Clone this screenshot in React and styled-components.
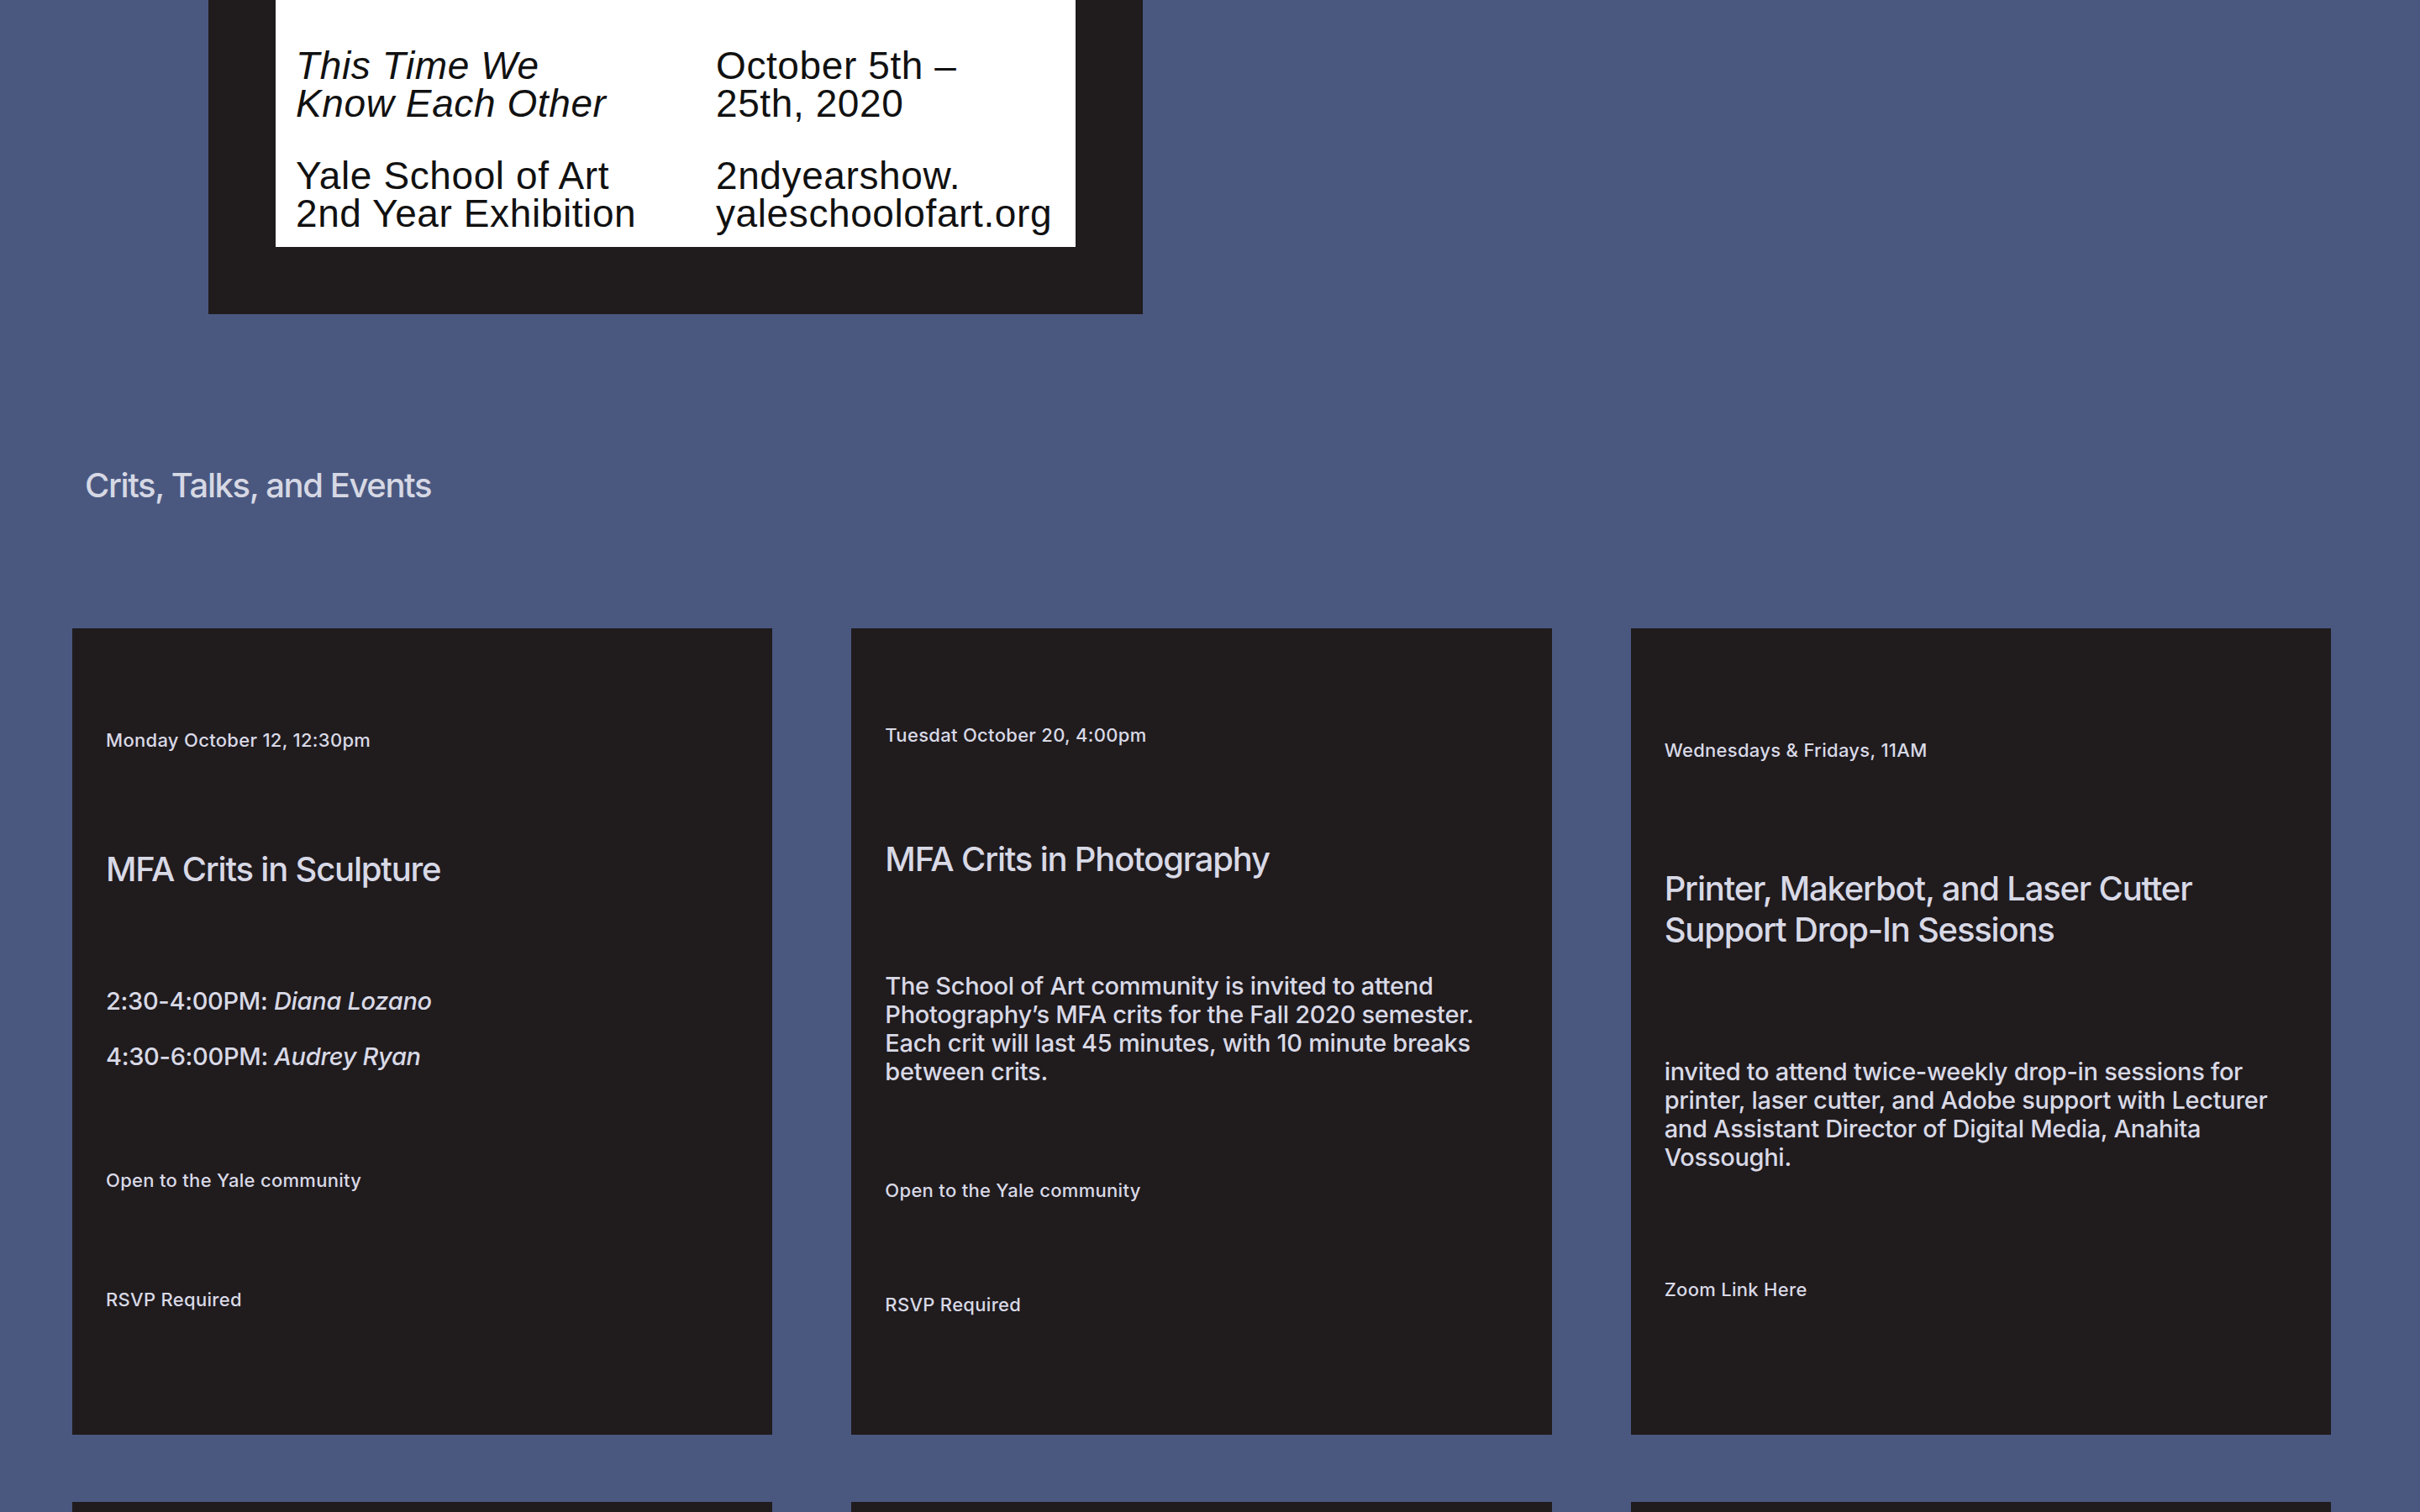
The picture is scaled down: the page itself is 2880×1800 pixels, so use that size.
import styled, { createGlobalStyle } from "styled-components";

const GlobalStyle = createGlobalStyle`
    html, body {
        margin: 0;
        padding: 0;
        background-color: #4a5880;
    }
    body {
        font-family: Inter, "Noto Sans", "Liberation Sans", sans-serif;
        color: #d8d9e6;
    }
`;

const StyledPage = styled.div`
    width: 2880px;
    height: 1800px;
    overflow: hidden;
`;

/* the page is scrolled: the top of the poster sits above the window */
const StyledPosterFrame = styled.section`
    width: 952px;
    margin: -140px 0 0 248px;
    padding: 80px;
    background-color: #201b1d;
`;

const StyledPosterSheet = styled.div`
    display: grid;
    grid-template-columns: 500px 1fr;
    row-gap: 42px;
    padding: 116px 24px 18px 24px;
    background-color: #ffffff;
    color: #111111;
    font-family: "Liberation Sans", Arial, sans-serif;
    font-size: 46px;
    line-height: 44.5px;
    letter-spacing: 0.6px;
`;

const StyledPosterText = styled.div`
    font-style: ${(props) => (props.italic ? "italic" : "normal")};
`;

const StyledHeading = styled.h2`
    margin: 180px 0 146px 101px;
    font-size: 40px;
    font-weight: 500;
    line-height: 48px;
    letter-spacing: -1.4px;
    color: #d6d8e4;
`;

const StyledGrid = styled.div`
    display: grid;
    grid-template-columns: repeat(3, 1fr);
    column-gap: 94px;
    row-gap: 80px;
    padding: 0 106px 0 86px;
`;

const StyledCard = styled.article`
    display: flex;
    flex-direction: column;
    justify-content: space-evenly;
    height: 960px;
    box-sizing: border-box;
    padding: 4px 40px 32px 40px;
    background-color: #201b1d;
`;

const StyledMeta = styled.p`
    margin: 0;
    font-size: 22px;
    font-weight: 500;
    line-height: 26px;
    letter-spacing: 0.3px;
`;

const StyledTitle = styled.h3`
    margin: 0;
    font-size: 40px;
    font-weight: 500;
    line-height: 49px;
    letter-spacing: -1.2px;
`;

const StyledBody = styled.div`
    display: flex;
    flex-direction: column;
    gap: 32px;
`;

const StyledText = styled.p`
    margin: 0;
    font-size: 29px;
    font-weight: 500;
    line-height: 34px;
    letter-spacing: -0.3px;

    em {
        font-style: italic;
    }
`;

const events = [
    {
        date: "Monday October 12, 12:30pm",
        title: "MFA Crits in Sculpture",
        body: [
            <>2:30-4:00PM: <em>Diana Lozano</em></>,
            <>4:30-6:00PM: <em>Audrey Ryan</em></>,
        ],
        notes: ["Open to the Yale community", "RSVP Required"],
    },
    {
        date: "Tuesdat October 20, 4:00pm",
        title: "MFA Crits in Photography",
        body: [
            "The School of Art community is invited to attend Photography’s MFA crits for the Fall 2020 semester. Each crit will last 45 minutes, with 10 minute breaks between crits.",
        ],
        notes: ["Open to the Yale community", "RSVP Required"],
    },
    {
        date: "Wednesdays & Fridays, 11AM",
        title: "Printer, Makerbot, and Laser Cutter Support Drop-In Sessions",
        body: [
            "invited to attend twice-weekly drop-in sessions for printer, laser cutter, and Adobe support with Lecturer and Assistant Director of Digital Media, Anahita Vossoughi.",
        ],
        notes: ["Zoom Link Here"],
    },
    {
        date: "Thursday October 22, 1:00pm",
        title: "MFA Crits in Painting/Printmaking",
        body: ["Open studio crits for second year students."],
        notes: ["Open to the Yale community"],
    },
    {
        date: "Friday October 23, 5:00pm",
        title: "Visiting Artist Talk",
        body: ["A conversation with the visiting artist, followed by Q&A."],
        notes: ["Zoom Link Here"],
    },
    {
        date: "Monday October 26, 12:30pm",
        title: "MFA Crits in Graphic Design",
        body: ["Thesis work in progress, presented by the second year class."],
        notes: ["RSVP Required"],
    },
];

const EventCard = ({ event }) => {
    return <StyledCard>
                <StyledMeta>{event.date}</StyledMeta>
                <StyledTitle>{event.title}</StyledTitle>
                <StyledBody>
                    {event.body.map((line, i) => (
                        <StyledText key={i}>{line}</StyledText>
                    ))}
                </StyledBody>
                {event.notes.map((note) => (
                    <StyledMeta key={note}>{note}</StyledMeta>
                ))}
            </StyledCard>
}

const App = () => {
    return <StyledPage>
                <GlobalStyle />
                <StyledPosterFrame>
                    <StyledPosterSheet>
                        <StyledPosterText italic>This Time We<br />Know Each Other</StyledPosterText>
                        <StyledPosterText>October 5th –<br />25th, 2020</StyledPosterText>
                        <StyledPosterText>Yale School of Art<br />2nd Year Exhibition</StyledPosterText>
                        <StyledPosterText>2ndyearshow.<br />yaleschoolofart.org</StyledPosterText>
                    </StyledPosterSheet>
                </StyledPosterFrame>
                <StyledHeading>Crits, Talks, and Events</StyledHeading>
                <StyledGrid>
                    {events.map((event) => (
                        <EventCard key={event.title} event={event} />
                    ))}
                </StyledGrid>
            </StyledPage>
}

export default App
